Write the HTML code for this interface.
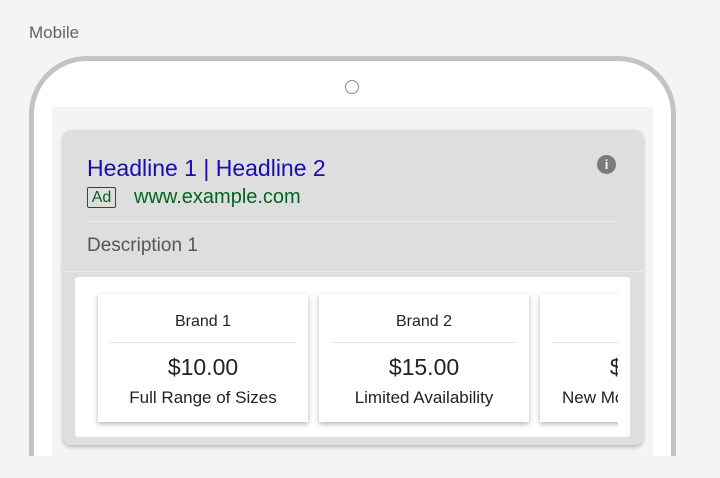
<!DOCTYPE html>
<html><head><style>
html,body{margin:0;width:720px;height:478px;overflow:hidden}
body{background:#f4f4f4;font-family:"Liberation Sans",Roboto,sans-serif;position:relative}
.lbl{position:absolute;left:29px;top:23px;font-size:17px;color:#5f6368}
.frame{position:absolute;left:29px;top:56px;width:637px;height:410px;border:5px solid #c3c3c3;border-bottom:none;border-radius:58px 58px 0 0;background:#fff}
.bottom{position:absolute;left:0;top:456px;width:720px;height:30px;background:#f4f4f4}
.cam{position:absolute;left:345px;top:80px;width:14px;height:14px;border:1.5px solid #888;border-radius:50%;box-sizing:border-box}
.screen{position:absolute;left:52px;top:107px;width:601px;height:360px;background:#f4f4f4}
.card{position:absolute;left:63px;top:130px;width:580px;height:315px;background:#dedede;border-radius:8px;box-shadow:0 2px 4px rgba(0,0,0,.25)}
.h{position:absolute;left:87px;top:155px;font-size:23px;color:#1a0dab}
.ad{position:absolute;left:87px;top:187px;width:27px;height:19px;border:1px solid #006621;border-radius:2px;color:#006621;font-size:16px;line-height:19px;text-align:center}
.url{position:absolute;left:134px;top:186px;font-size:20px;color:#006621}
.info{position:absolute;left:597px;top:155px;width:19px;height:19px;border-radius:50%;background:#7b7b7b;color:#fff;font-size:13px;font-weight:bold;text-align:center;line-height:19px}
.d1{position:absolute;left:87px;top:221px;width:531px;height:1px;background:#ececec}
.desc{position:absolute;left:87px;top:235px;font-size:19px;color:#555}
.d2{position:absolute;left:63px;top:271px;width:580px;height:1px;background:#ececec}
.panel{position:absolute;left:75px;top:277px;width:555px;height:160px;background:#fff;border-radius:3px;overflow:hidden}
.p{position:absolute;top:17px;width:210px;height:128px;background:#fff;box-shadow:0 2px 5px rgba(0,0,0,.3);text-align:center;color:#222;white-space:nowrap}
.p .b{position:absolute;top:19px;left:0;right:0;font-size:16px}
.p .l{position:absolute;left:12px;right:12px;top:48px;height:1px;background:#e6e6e6}
.p .pr{position:absolute;top:60px;left:0;right:0;font-size:23px}
.p .s{position:absolute;top:94px;left:0;right:0;font-size:17px}
.clip{position:absolute;left:543px;top:0;width:12px;height:160px;background:#fff}
</style></head><body>
<div class="lbl">Mobile</div>
<div class="frame"></div>
<div class="bottom"></div>
<div class="cam"></div>
<div class="screen"></div>
<div class="card"></div>
<div class="h">Headline 1 | Headline 2</div>
<div class="ad">Ad</div>
<div class="url">www.example.com</div>
<div class="info">i</div>
<div class="d1"></div>
<div class="desc">Description 1</div>
<div class="d2"></div>
<div class="panel">
<div class="p" style="left:23px"><div class="b">Brand 1</div><div class="l"></div><div class="pr">$10.00</div><div class="s">Full Range of Sizes</div></div>
<div class="p" style="left:244px"><div class="b">Brand 2</div><div class="l"></div><div class="pr">$15.00</div><div class="s">Limited Availability</div></div>
<div class="p" style="left:465px"><div class="b">Brand 3</div><div class="l"></div><div class="pr">$20.00</div><div class="s">New Models Available</div></div>
<div class="clip"></div>
</div>
</body></html>
